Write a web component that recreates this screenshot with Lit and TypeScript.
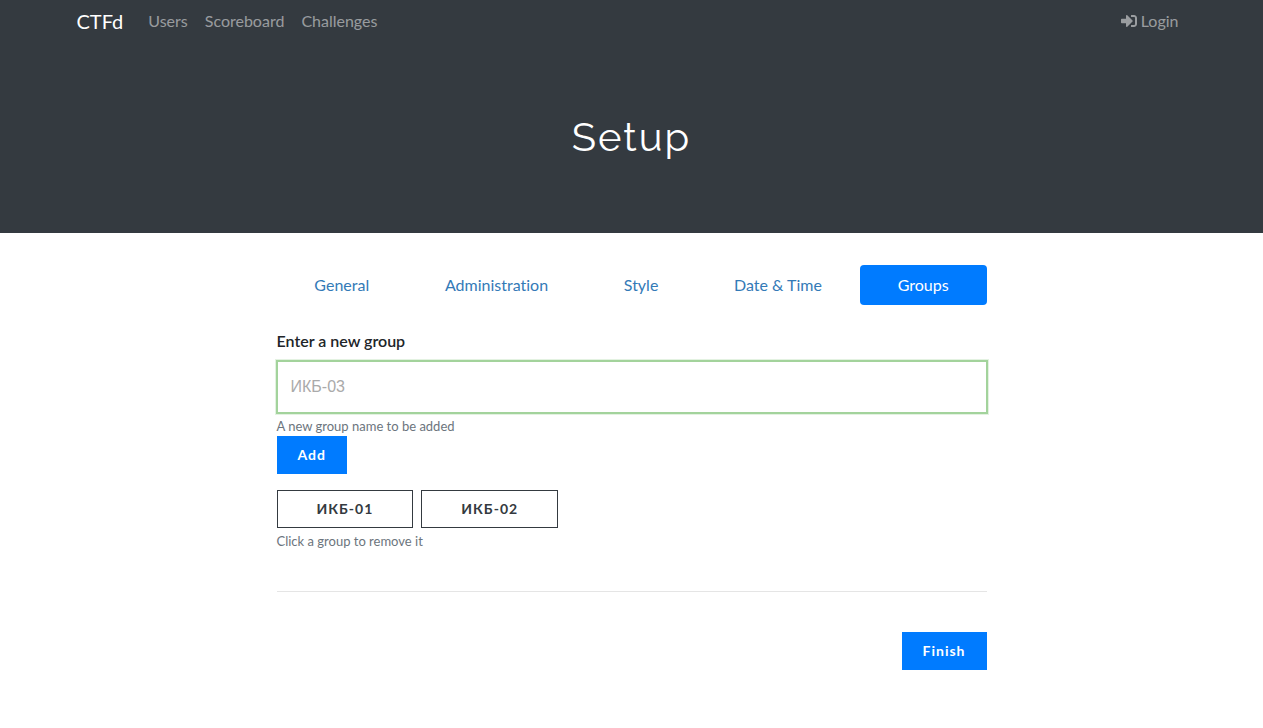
import { LitElement, html, css } from "lit";
import { customElement, state } from "lit/decorators.js";

@customElement("app-root")
export class AppRoot extends LitElement {
  static styles = css`
    :host {
      display: block;
      min-height: 100vh;
      background: #fff;
      color: #212529;
      font: 400 16px/24px Lato, "Liberation Sans", sans-serif;
      font-variant-ligatures: none;
    }
    * {
      box-sizing: border-box;
    }
    a {
      text-decoration: none;
    }
    .masthead {
      background: #343a40;
      color: #fff;
      padding-bottom: 72px;
    }
    .navbar {
      max-width: 1140px;
      margin: 0 auto;
      padding: 1px 15px 0;
      display: flex;
      align-items: center;
    }
    .brand {
      color: #fff;
      font-size: 20px;
      line-height: 30px;
      margin-right: 17px;
    }
    .links {
      display: flex;
      flex: 1;
      gap: 1px;
      list-style: none;
      margin: 0;
      padding: 0;
    }
    .links li:last-child {
      margin-left: auto;
    }
    .link {
      display: flex;
      align-items: center;
      gap: 4px;
      padding: 8px;
      color: rgba(255, 255, 255, 0.5);
    }
    .icon {
      width: 16px;
      height: 16px;
      fill: currentColor;
    }
    h1 {
      margin: 0;
      padding-top: 72px;
      text-align: center;
      font-family: Raleway, "Open Sans", sans-serif;
      font-size: 40px;
      line-height: 48px;
      font-weight: 400;
      letter-spacing: 2px;
    }
    main {
      max-width: 710px;
      margin: 0 auto;
      padding: 32px 0;
    }
    .tabs {
      display: flex;
      margin-bottom: 24px;
    }
    .tab {
      flex: 1 1 auto;
      padding: 8px 16px;
      border-radius: 4px;
      text-align: center;
      color: #337ab7;
    }
    .tab.active {
      background: #007bff;
      color: #fff;
    }
    .label {
      display: block;
      margin-bottom: 8px;
      font-weight: 600;
    }
    .field {
      display: block;
      width: 100%;
      height: 52px;
      padding: 0 13px;
      border: 1px solid #a3d39c;
      border-radius: 0;
      outline: none;
      box-shadow: 0 0 0 1px #a3d39c, 0 0 0 2px #e3f2e1;
      background: #fff;
      color: #212529;
      font: 400 16px/24px "Liberation Sans", sans-serif;
    }
    .field::placeholder {
      color: #aaa;
      opacity: 1;
    }
    .hint {
      display: block;
      padding-top: 4px;
      color: #6c757d;
      font-size: 13px;
      line-height: 19px;
    }
    .btn {
      height: 38px;
      padding: 0 20px;
      border: 1px solid #007bff;
      border-radius: 0;
      background: #007bff;
      color: #fff;
      font: 700 14px/24px Lato, "Liberation Sans", sans-serif;
      letter-spacing: 1px;
      cursor: pointer;
    }
    .groups {
      display: flex;
      flex-wrap: wrap;
      gap: 8px;
      margin-top: 16px;
    }
    .btn.group {
      padding: 0 39px;
      border-color: #343a40;
      background: #fff;
      color: #343a40;
    }
    hr {
      margin: 40px 0;
      border: 0;
      border-top: 1px solid #e5e5e5;
    }
    .actions {
      display: flex;
      justify-content: flex-end;
    }
  `;

  @state() private groups = ["ИКБ-01", "ИКБ-02"];

  private tabs = ["General", "Administration", "Style", "Date & Time", "Groups"];

  private add() {
    const field = this.renderRoot.querySelector<HTMLInputElement>("#group")!;
    const name = field.value.trim();
    if (name && !this.groups.includes(name)) {
      this.groups = [...this.groups, name];
      field.value = "";
    }
  }

  private remove(name: string) {
    this.groups = this.groups.filter((g) => g !== name);
  }

  render() {
    return html`
      <header class="masthead">
        <nav class="navbar">
          <a class="brand" href="#">CTFd</a>
          <ul class="links">
            <li><a class="link" href="#users">Users</a></li>
            <li><a class="link" href="#scoreboard">Scoreboard</a></li>
            <li><a class="link" href="#challenges">Challenges</a></li>
            <li>
              <a class="link" href="#login">
                <svg class="icon" viewBox="0 0 512 512" aria-hidden="true">
                  <path
                    d="M416 448h-84c-6.600 0-12-5.400-12-12v-40c0-6.600 5.400-12 12-12h84c17.700 0 32-14.300 32-32V160c0-17.700-14.300-32-32-32h-84c-6.600 0-12-5.400-12-12V76c0-6.600 5.400-12 12-12h84c53 0 96 43 96 96v192c0 53-43 96-96 96zm-47-209L201 71c-15-15-41-4.500-41 17v96H24c-13.300 0-24 10.700-24 24v96c0 13.300 10.700 24 24 24h136v96c0 21.500 26 32 41 17l168-168c9.300-9.400 9.300-24.600 0-34z"
                  ></path>
                </svg>
                Login
              </a>
            </li>
          </ul>
        </nav>
        <h1>Setup</h1>
      </header>
      <main>
        <nav class="tabs">
          ${this.tabs.map(
            (t) => html`<a class="tab ${t === "Groups" ? "active" : ""}" href="#">${t}</a>`
          )}
        </nav>
        <label class="label" for="group">Enter a new group</label>
        <input class="field" id="group" type="text" placeholder="ИКБ-03" aria-describedby="group-hint" />
        <small class="hint" id="group-hint">A new group name to be added</small>
        <button class="btn" type="button" @click=${this.add}>Add</button>
        <div class="groups">
          ${this.groups.map(
            (g) => html`<button class="btn group" type="button" @click=${() => this.remove(g)}>${g}</button>`
          )}
        </div>
        <small class="hint">Click a group to remove it</small>
        <hr />
        <div class="actions"><button class="btn" type="submit">Finish</button></div>
      </main>
    `;
  }
}
